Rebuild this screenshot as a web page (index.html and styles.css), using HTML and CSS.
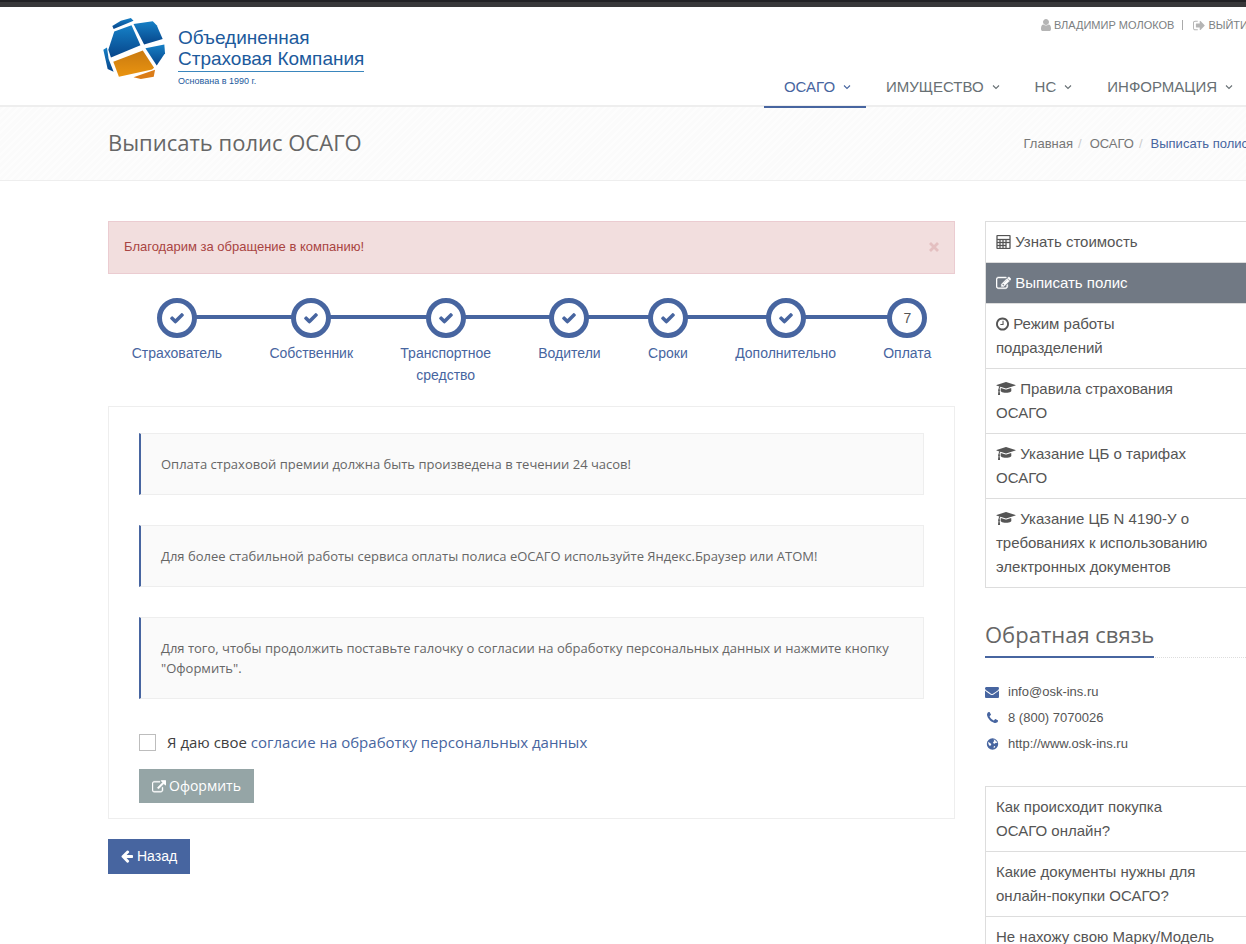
FILE: index.html
```html
<!DOCTYPE html>
<html lang="ru">
<head>
<meta charset="utf-8">
<meta name="viewport" content="width=device-width, initial-scale=1">
<title>Выписать полис ОСАГО</title>
<link rel="stylesheet" href="styles.css">
</head>
<body>
<svg class="sprite" aria-hidden="true">
  <symbol id="check" viewBox="0 0 1792 1792"><path d="M1671 566q0 40-28 68l-724 724-136 136q-28 28-68 28t-68-28l-136-136-362-362q-28-28-28-68t28-68l136-136q28-28 68-28t68 28l294 295 656-657q28-28 68-28t68 28l136 136q28 28 28 68z"/></symbol>
  <symbol id="cap" viewBox="0 0 2304 1792"><path d="M1774 836l18 316q4 69-82 128t-235 93.500-323 34.500-323-34.500-235-93.500-82-128l18-316 574 181q22 7 48 7t48-7zm530-324q0 23-22 31l-1120 352q-4 1-10 1t-10-1l-652-206q-43 34-71 111.500t-34 178.500q63 36 63 109 0 69-58 107l58 433q2 14-8 25-9 11-24 11h-192q-15 0-24-11-10-11-8-25l58-433q-58-38-58-107 0-73 65-111 11-207 98-330l-333-104q-22-8-22-31t22-31l1120-352q4-1 10-1t10 1l1120 352q22 8 22 31z"/></symbol>
  <symbol id="caret" viewBox="0 0 8 8"><path d="M1 2.500l3 3 3-3" fill="none" stroke="currentColor" stroke-width="1.100"/></symbol>
</svg>
<div class="topbar"></div>
<header class="header">
  <div class="container header-row">
    <a class="logo" href="#">
      <svg class="logo-mark" viewBox="38 52 190 188" aria-hidden="true">
        <defs>
          <linearGradient id="blue" x1="0" y1="0" x2="0" y2="1"><stop offset="0" stop-color="#1680c6"/><stop offset="1" stop-color="#07458a"/></linearGradient>
          <linearGradient id="orange" x1="0" y1="0" x2="0" y2="1"><stop offset="0" stop-color="#c97a10"/><stop offset="1" stop-color="#ea9410"/></linearGradient>
        </defs>
        <g fill="url(#blue)">
          <path d="M66 78L92 62 122 54 130 62 70 87z"/>
          <path d="M72 95L124 76 151 136 62 173 54 150z"/>
          <path d="M130 72L188 64 200 76 218 117 162 134z"/>
          <path d="M166 145L223 134 225 160 200 197z"/>
          <path d="M39 150L50 143 55 178 70 216 52 208z"/>
        </g>
        <path fill="url(#orange)" d="M69 186L158 152 192 204 186 209 86 231z"/>
        <path fill="#db7c17" d="M130 233L195 210 191 231 152 238z"/>
      </svg>
      <span class="logo-text">
        <span class="logo-name">Объединенная<br>Страховая Компания</span>
        <span class="logo-since">Основана в 1990 г.</span>
      </span>
    </a>
    <div class="header-side">
      <ul class="userbar">
        <li><a href="#"><svg class="user-icon" viewBox="256 128 1280 1536"><path d="M1536 1399q0 109-62.500 187t-150.500 78h-854q-88 0-150.500-78t-62.500-187q0-85 8.500-160.500t31.500-152 58.500-131 94-89 134.500-34.500q131 128 313 128t313-128q76 0 134.500 34.500t94 89 58.500 131 31.500 152 8.500 160.500zm-256-887q0 159-112.500 271.500t-271.500 112.500-271.500-112.500-112.500-271.500 112.500-271.500 271.500-112.500 271.500 112.500 112.500 271.500z"/></svg>ВЛАДИМИР МОЛОКОВ</a></li>
        <li class="divider"></li>
        <li><a href="#"><svg class="exit-icon" viewBox="64 200 1600 1400"><path d="M704 1440q0 4 1 20t.5 26.500-3 23.500-10 19.500-20.500 6.500h-320q-119 0-203.500-84.500t-84.500-203.500v-704q0-119 84.500-203.500t203.500-84.500h320q13 0 22.500 9.500t9.500 22.500q0 4 1 20t.5 26.500-3 23.500-10 19.500-20.500 6.500h-320q-66 0-113 47t-47 113v704q0 66 47 113t113 47h312l11.500 1 11.500 3 8 5.500 7 9 2 13.500zm928-544q0 26-19 45l-544 544q-19 19-45 19t-45-19-19-45v-288h-448q-26 0-45-19t-19-45v-384q0-26 19-45t45-19h448v-288q0-26 19-45t45-19 45 19l544 544q19 19 19 45z"/></svg>ВЫЙТИ</a></li>
      </ul>
      <nav class="nav">
        <a class="nav-link active" href="#">ОСАГО<svg><use href="#caret"/></svg></a>
        <a class="nav-link" href="#">ИМУЩЕСТВО<svg><use href="#caret"/></svg></a>
        <a class="nav-link" href="#">НС<svg><use href="#caret"/></svg></a>
        <a class="nav-link" href="#">ИНФОРМАЦИЯ<svg><use href="#caret"/></svg></a>
      </nav>
    </div>
  </div>
</header>
<section class="titlebar">
  <div class="container titlebar-row">
    <h1>Выписать полис ОСАГО</h1>
    <ul class="crumbs">
      <li><a href="#">Главная</a></li>
      <li><a href="#">ОСАГО</a></li>
      <li class="current">Выписать полис</li>
    </ul>
  </div>
</section>
<div class="container layout">
  <main>
    <div class="alert" role="alert">
      <span>Благодарим за обращение в компанию!</span>
      <button class="close" type="button" aria-label="Закрыть"><svg viewBox="0 0 10 10"><path d="M1 1l8 8M9 1l-8 8" stroke="currentColor" stroke-width="2.800"/></svg></button>
    </div>
    <ol class="steps">
      <li><span class="dot"><svg><use href="#check"/></svg></span>Страхователь</li>
      <li><span class="dot"><svg><use href="#check"/></svg></span>Собственник</li>
      <li><span class="dot"><svg><use href="#check"/></svg></span>Транспортное<br>средство</li>
      <li><span class="dot"><svg><use href="#check"/></svg></span>Водители</li>
      <li><span class="dot"><svg><use href="#check"/></svg></span>Сроки</li>
      <li><span class="dot"><svg><use href="#check"/></svg></span>Дополнительно</li>
      <li><span class="dot">7</span>Оплата</li>
    </ol>
    <form class="panel">
      <p class="note">Оплата страховой премии должна быть произведена в течении 24 часов!</p>
      <p class="note">Для более стабильной работы сервиса оплаты полиса еОСАГО используйте Яндекс.Браузер или АТОМ!</p>
      <p class="note">Для того, чтобы продолжить поставьте галочку о согласии на обработку персональных данных и нажмите кнопку "Оформить".</p>
      <div class="consent">
        <input type="checkbox" id="agree">
        <label for="agree">Я даю свое <a href="#">согласие на обработку персональных данных</a></label>
      </div>
      <button class="btn btn-submit" type="submit"><svg class="link-icon" viewBox="0 64 1792 1472"><path d="M1408 928v320q0 119-84.500 203.500t-203.500 84.500h-832q-119 0-203.500-84.500t-84.500-203.500v-832q0-119 84.500-203.500t203.500-84.500h704q14 0 23 9t9 23v64q0 14-9 23t-23 9h-704q-66 0-113 47t-47 113v832q0 66 47 113t113 47h832q66 0 113-47t47-113v-320q0-14 9-23t23-9h64q14 0 23 9t9 23zm384-864v512q0 26-19 45t-45 19-45-19l-176-176-652 652q-10 10-23 10t-23-10l-114-114q-10-10-10-23t10-23l652-652-176-176q-19-19-19-45t19-45 45-19h512q26 0 45 19t19 45z"/></svg>Оформить</button>
    </form>
    <button class="btn btn-back" type="button"><svg class="arrow-icon" viewBox="128 200 1536 1500"><path d="M1664 896v128q0 53-32.500 90.500t-84.500 37.500h-704l293 294q38 36 38 90t-38 90l-75 76q-37 37-90 37-52 0-91-37l-651-652q-37-37-37-90 0-52 37-91l651-650q38-38 91-38 52 0 90 38l75 74q38 38 38 91t-38 91l-293 293h704q52 0 84.500 37.500t32.500 90.500z"/></svg>Назад</button>
  </main>
  <aside>
    <ul class="menu">
      <li><a href="#"><svg class="ic" viewBox="0 0 14 14"><path fill-rule="evenodd" stroke="currentColor" stroke-width=".3" d="M1 0h12a1 1 0 0 1 1 1v12a1 1 0 0 1-1 1H1a1 1 0 0 1-1-1V1a1 1 0 0 1 1-1zM1 1v3h12V1zM1 5v2h2V5zM4 5v2h2V5zM7 5v2h2V5zM10 5v2h3V5zM1 8v2h2V8zM4 8v2h2V8zM7 8v2h2V8zM1 11v2h2v-2zM4 11v2h2v-2zM7 11v2h2v-2zM10 8v5h3V8z"/></svg> Узнать стоимость</a></li>
      <li class="active"><a href="#"><svg class="ic" viewBox="0 100 1792 1500"><path stroke="currentColor" stroke-width="50" d="M888 1184l116-116-152-152-116 116v56h96v96h56zm440-720q-16-16-33 1l-350 350q-17 17-1 33t33-1l350-350q17-17 1-33zm80 594v190q0 119-84.500 203.500t-203.500 84.500h-832q-119 0-203.500-84.500t-84.500-203.500v-832q0-119 84.500-203.500t203.500-84.500h832q63 0 117 25 15 7 18 23 3 17-9 29l-49 49q-14 14-32 8-23-6-45-6h-832q-66 0-113 47t-47 113v832q0 66 47 113t113 47h832q66 0 113-47t47-113v-126q0-13 9-22l64-64q15-15 35-7t20 29zm-96-738l288 288-672 672h-288v-288zm444 132l-92 92-288-288 92-92q28-28 68-28t68 28l152 152q28 28 28 68t-28 68z"/></svg> Выписать полис</a></li>
      <li><a href="#"><svg class="ic ic-clock" viewBox="128 128 1536 1536"><path d="M1024 544v448q0 14-9 23t-23 9h-320q-14 0-23-9t-9-23v-64q0-14 9-23t23-9h224v-352q0-14 9-23t23-9h64q14 0 23 9t9 23zm416 352q0-148-73-273t-198-198-273-73-273 73-198 198-73 273 73 273 198 198 273 73 273-73 198-198 73-273zm224 0q0 209-103 385.500t-279.500 279.500-385.500 103-385.500-103-279.500-279.500-103-385.500 103-385.500 279.500-279.500 385.500-103 385.500 103 279.500 279.500 103 385.500z"/></svg> Режим работы подразделений</a></li>
      <li><a href="#"><svg class="ic ic-cap"><use href="#cap"/></svg> Правила страхования ОСАГО</a></li>
      <li><a href="#"><svg class="ic ic-cap"><use href="#cap"/></svg> Указание ЦБ о тарифах ОСАГО</a></li>
      <li><a href="#"><svg class="ic ic-cap"><use href="#cap"/></svg> Указание ЦБ N 4190-У о требованиях к использованию электронных документов</a></li>
    </ul>
    <div class="headline"><h2>Обратная связь</h2></div>
    <ul class="contacts">
      <li><svg viewBox="0 0 1920 1792"><path d="M1792 710v794q0 66-47 113t-113 47h-1472q-66 0-113-47t-47-113v-794q44 49 101 87 362 246 497 345 57 42 92.500 65.500t94.500 48 110 24.500h2q51 0 110-24.500t94.500-48 92.500-65.500q170-123 498-345 57-39 100-87zm0-294q0 79-49 151t-122 123q-376 261-468 325-10 7-42.500 30.500t-54 38-52 32.500-57.500 27-50 9h-2q-23 0-50-9t-57.500-27-52-32.500-54-38-42.500-30.500q-91-64-262-182.500t-205-142.500q-62-42-117-115.500t-55-136.500q0-78 41.500-130t118.500-52h1472q65 0 112.500 47t47.500 113z"/></svg><a href="#">info@osk-ins.ru</a></li>
      <li><svg viewBox="0 0 1792 1792"><path d="M1600 1240q0 27-10 70.500t-21 68.500q-21 50-122 106-94 51-186 51-27 0-53-3.500t-57.500-12.500-47-14.500-55.500-20.500-49-18q-98-35-175-83-127-79-264-216t-216-264q-48-77-83-175-3-9-18-49t-20.500-55.500-14.500-47-12.500-57.500-3.500-53q0-92 51-186 56-101 106-122 25-11 68.500-21t70.500-10q14 0 21 3 18 6 53 76 11 19 30 54t35 63.500 31 53.500q3 4 17.500 25t21.500 35.500 7 28.500q0 20-28.500 50t-62 55-62 53-28.500 46q0 9 5 22.500t8.500 20.500 14 24 11.500 19q76 137 174 235t235 174q2 1 19 11.500t24 14 20.500 8.500 22.500 5q18 0 46-28.500t53-62 55-62 50-28.500q14 0 28.500 7t35.500 21.500 25 17.500q25 15 53.500 31t63.500 35 54 30q70 35 76 53 3 7 3 21z"/></svg><span>8 (800) 7070026</span></li>
      <li><svg viewBox="0 0 14 14"><circle cx="7" cy="7" r="5.700"/><path fill="#fff" d="M8 2.600l1.700.4.600 1.200 1.200.6.300 1.300-1.500-.3-1.100.9-1.100-.3-.6-1.200L8.800 4zM2.600 4.800l1.500 1 1.700 1.100-.4 1.300-1.100.7L3 7.300zM8.300 9.300l1.400-.3-.3 1.300-1.200.9z"/></svg><a href="#">http://www.osk-ins.ru</a></li>
    </ul>
    <ul class="menu">
      <li><a href="#">Как происходит покупка ОСАГО онлайн?</a></li>
      <li><a href="#">Какие документы нужны для онлайн-покупки ОСАГО?</a></li>
      <li><a href="#">Не нахожу свою Марку/Модель</a></li>
    </ul>
  </aside>
</div>
</body>
</html>
```
FILE: styles.css
```css
* { box-sizing: border-box; }
html { height: 100%; overflow: hidden; }
body {
  margin: 0;
  height: 100%;
  overflow: hidden;
  background: #fff;
  color: #555;
  font: 13px/20px "Liberation Sans", Arial, sans-serif;
}
a { color: inherit; text-decoration: none; }
ul, ol { list-style: none; margin: 0; padding: 0; }
h1, h2, p { margin: 0; font-weight: 400; }
svg { fill: currentColor; flex: none; }
button { font: inherit; border: 0; cursor: pointer; }
.sprite { display: none; }
.container { margin: 0 -2px 0 108px; }

.topbar { height: 7px; background: linear-gradient(#222225 2px, #38383a 2px); }

.header { border-bottom: 2px solid #eee; }
.header-row { display: flex; justify-content: space-between; height: 98px; }
.logo { display: flex; gap: 12px; margin-left: -5px; padding-top: 10px; color: #1c5a9c; }
.logo-mark { width: 63px; height: 63px; }
.logo-text { padding-top: 10px; }
.logo-name { display: block; padding-bottom: 2px; border-bottom: 1px solid #3a86bd; font-size: 19px; line-height: 21px; }
.logo-since { display: block; font-size: 9px; line-height: 18px; }
.header-side { display: flex; flex-direction: column; justify-content: space-between; align-items: flex-end; }
.userbar { display: flex; align-items: center; padding-top: 8px; font-size: 11px; color: #7c8082; }
.userbar a { display: flex; align-items: center; gap: 3px; }
.userbar svg { color: #b5b5b5; }
.user-icon { width: 10px; height: 12px; }
.exit-icon { width: 12px; height: 11px; }
.divider { width: 1px; height: 10px; margin: 0 10px 0 8px; background: #aaa; }
.nav { display: flex; margin-bottom: -3px; }
.nav-link {
  display: flex;
  align-items: center;
  gap: 8px;
  padding: 10px 15px 7px 20px;
  border-bottom: 2px solid transparent;
  font-size: 15px;
  line-height: 24px;
  color: #687074;
}
.nav-link svg { width: 8px; height: 8px; }
.nav-link.active { color: #4765a0; border-color: #4765a0; }

.titlebar {
  border-bottom: 1px solid #eee;
  background: repeating-linear-gradient(-45deg, #fbfbfb 0 3px, #fdfdfd 3px 5px);
}
.titlebar-row { display: flex; justify-content: space-between; align-items: center; height: 73px; }
h1, h2 { font: 22px/32px "Open Sans", sans-serif; color: #666; }
.titlebar h1 { padding-bottom: 4px; }
.crumbs { display: flex; color: #777; }
.crumbs li + li::before { content: "/"; color: #ccc; padding: 0 8px 0 5px; }
.crumbs .current { color: #4765a0; }

.layout { display: grid; grid-template-columns: minmax(0, 1fr) 263px; gap: 30px; padding-top: 40px; }
.alert {
  display: flex;
  justify-content: space-between;
  padding: 15px 15px 16px;
  border: 1px solid #ebccd1;
  background: #f2dede;
  color: #a94442;
}
.close { display: flex; align-items: center; padding: 0; background: none; color: #e4bfc0; }
.close svg { width: 10px; height: 10px; }

.steps { display: flex; margin: 24px 0 20px; font-size: 14px; line-height: 22px; color: #4765a0; text-align: center; }
.steps li { position: relative; flex: 1 1 auto; }
.steps li::before { content: ""; position: absolute; top: 17px; left: 0; right: 0; height: 4px; background: #4765a0; }
.steps li:first-child::before { left: 50%; }
.steps li:last-child::before { right: 50%; }
.dot {
  position: relative;
  display: flex;
  align-items: center;
  justify-content: center;
  width: 40px;
  height: 40px;
  margin: 0 auto 4px;
  border: 5px solid #4765a0;
  border-radius: 50%;
  background: #fff;
  color: #555;
}
.dot svg { width: 16px; height: 16px; color: #4765a0; }

.panel { padding: 26px 30px 15px; border: 1px solid #eee; }
.note {
  margin-bottom: 30px;
  padding: 20px;
  border: 1px solid #eee;
  border-left: 2px solid #4765a0;
  background: #fafafa;
  font-family: "Open Sans", sans-serif;
  color: #666;
}
.consent { display: flex; align-items: center; gap: 11px; margin-bottom: 14px; font: 15px/26px "Open Sans", sans-serif; color: #404040; }
.consent input { appearance: none; width: 17px; height: 17px; margin: 0; border: 1px solid #bdbdbd; background: #fff; }
.consent a { color: #4765a0; }
.btn { display: inline-flex; align-items: center; gap: 3px; padding: 6px 13px; color: #fff; font-size: 14px; line-height: 22px; }
.btn-submit { background: #95a5a6; font-family: "Open Sans", sans-serif; }
.btn-back { gap: 4px; margin-top: 20px; background: #4765a0; line-height: 23px; }
.link-icon { width: 14px; height: 13px; stroke: currentColor; stroke-width: 50; }
.arrow-icon { width: 12px; height: 13px; }

.menu { border: 1px solid #ddd; font-size: 15px; line-height: 24px; }
.menu li + li { border-top: 1px solid #ddd; }
.menu a { display: block; padding: 8px 30px 8px 10px; }
.menu .active { background: #717984; color: #fff; }
.ic { width: 15px; height: 14px; vertical-align: -2px; }
.ic-clock { width: 13px; }
.ic-cap { width: 20px; height: 15px; }
.headline { margin-top: 30px; border-bottom: 1px dotted #ddd; }
.headline h2 { display: inline-block; margin-bottom: -1px; padding-bottom: 6px; border-bottom: 2px solid #4765a0; vertical-align: bottom; }
.contacts { display: grid; gap: 6px; margin: 24px 0 32px; }
.contacts li { display: flex; align-items: center; gap: 8px; }
.contacts svg { width: 15px; height: 14px; color: #4765a0; }
```
